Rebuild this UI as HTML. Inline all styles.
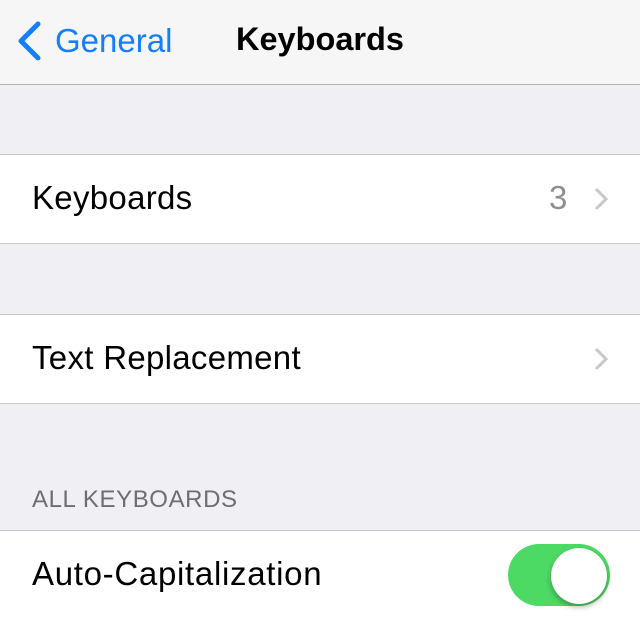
<!DOCTYPE html>
<html><head><style>
body{margin:0;width:640px;height:611px;overflow:hidden;background:#efeff4;font-family:"Liberation Sans",sans-serif;position:relative}
.a{position:absolute}
.nav{left:0;top:0;width:640px;height:84px;background:#f6f6f7;border-bottom:1px solid #b2b2b2}
.row{left:0;width:640px;background:#fff;border-top:1px solid #c8c7cc;border-bottom:1px solid #c8c7cc}
.t{position:absolute;left:32px;font-size:33px;letter-spacing:0.3px;color:#000}
</style></head><body>
<div class="a nav">
<svg class="a" style="left:12px;top:20px" width="32" height="44"><path d="M26 4 L9 21 L26 38" stroke="#157efb" stroke-width="5" fill="none" stroke-linecap="round" stroke-linejoin="round"/></svg>
<div class="a" style="left:55px;top:22px;font-size:33px;color:#157efb">General</div>
<div class="a" style="left:236px;top:21px;font-size:32.5px;font-weight:bold;color:#000">Keyboards</div>
</div>
<div class="a row" style="top:154px;height:88px">
<div class="t" style="top:24px">Keyboards</div>
<div class="a" style="left:549px;top:24px;font-size:33px;color:#8e8e93">3</div>
<svg class="a" style="left:592px;top:30px" width="20" height="28"><path d="M4 4 L14 14 L4 24" stroke="#c7c7cc" stroke-width="3" fill="none"/></svg>
</div>
<div class="a row" style="top:314px;height:88px">
<div class="t" style="top:24px">Text Replacement</div>
<svg class="a" style="left:592px;top:30px" width="20" height="28"><path d="M4 4 L14 14 L4 24" stroke="#c7c7cc" stroke-width="3" fill="none"/></svg>
</div>
<div class="a" style="left:32px;top:486px;font-size:24px;color:#6d6d72;letter-spacing:0.6px">ALL KEYBOARDS</div>
<div class="a row" style="top:530px;height:90px;border-bottom:none">
<div class="t" style="top:24px;letter-spacing:0.7px">Auto-Capitalization</div>
<div class="a" style="left:508px;top:13px;width:102px;height:62px;border-radius:31px;background:#4cd964"></div>
<div class="a" style="left:551px;top:17px;width:56px;height:56px;border-radius:50%;background:#fff;box-shadow:0 3px 6px rgba(0,0,0,0.3)"></div>
</div>
</body></html>
